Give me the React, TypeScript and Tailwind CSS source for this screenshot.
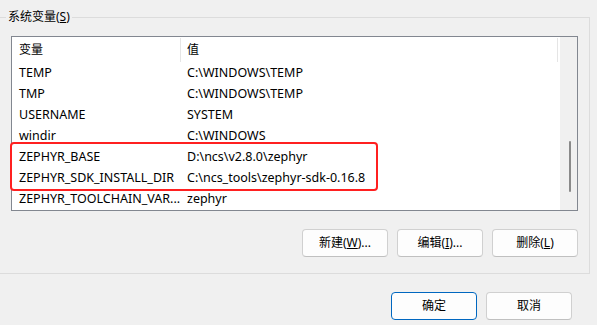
import React from "react";

const ROWS: [string, string][] = [
  ["TEMP", "C:\\WINDOWS\\TEMP"],
  ["TMP", "C:\\WINDOWS\\TEMP"],
  ["USERNAME", "SYSTEM"],
  ["windir", "C:\\WINDOWS"],
  ["ZEPHYR_BASE", "D:\\ncs\\v2.8.0\\zephyr"],
  ["ZEPHYR_SDK_INSTALL_DIR", "C:\\ncs_tools\\zephyr-sdk-0.16.8"],
  ["ZEPHYR_TOOLCHAIN_VAR...", "zephyr"],
];

function Btn({ children, primary }: { children: React.ReactNode; primary?: boolean }) {
  return (
    <button
      className={
        "w-[86px] h-[28px] rounded-[4px] bg-[#fdfdfd] text-[12px] text-black flex items-center justify-center " +
        (primary ? "border border-[#0067c0]" : "border border-[#d0d0d0] border-b-[#c0c0c0]")
      }
    >
      {children}
    </button>
  );
}

export default function App() {
  return (
    <div
      className="w-[597px] h-[325px] bg-[#f0f0f0] overflow-hidden text-[12px] text-black"
      style={{ fontFamily: '"Noto Sans", "Noto Sans CJK SC", sans-serif' }}
    >
      {/* group box */}
      <div className="relative mt-[17px] ml-[-2px] w-[592px] h-[257px] border border-[#dcdcdc] pt-[18px] pl-[12px]">
        <div className="absolute left-[7px] top-[-9px] bg-[#f0f0f0] px-[2px] leading-[16px]">
          系统变量(<span className="underline">S</span>)
        </div>

        {/* list view */}
        <div className="relative w-[567px] h-[175px] border border-[#828790] bg-white flex">
          <div className="flex-1 flex flex-col">
            <div className="h-[26px] flex items-start pt-[1px]">
              <div className="w-[169px] pl-[7px] border-r border-[#e5e5e5] h-[24px] flex items-center">变量</div>
              <div className="w-[377px] pl-[6px] border-r border-[#e5e5e5] h-[24px] flex items-center">值</div>
            </div>
            {ROWS.map(([k, v]) => (
              <div key={k} className="h-[21px] flex items-center whitespace-nowrap text-[12.5px]">
                <div className="w-[169px] pl-[7px] overflow-hidden">{k}</div>
                <div className="pl-[6px]">{v}</div>
              </div>
            ))}
          </div>
          {/* scrollbar */}
          <div className="w-[17px] bg-[#f0f0f0] flex justify-center pt-[104px]">
            <div className="w-[2px] h-[51px] bg-[#8a8a8a] rounded-full ml-[2px]" />
          </div>

          {/* highlight */}
          <div className="absolute left-[-2px] top-[105px] w-[368px] h-[49px] border-2 border-[#ff2020] rounded-[4px]" />
        </div>

        <div className="flex justify-end gap-[9px] mt-[18px] w-[567px]">
          <Btn>
            新建(<span className="underline">W</span>)...
          </Btn>
          <Btn>
            编辑(<span className="underline">I</span>)...
          </Btn>
          <Btn>
            删除(<span className="underline">L</span>)
          </Btn>
        </div>
      </div>

      <div className="flex justify-end gap-[9px] mt-[18px] pr-[25px]">
        <Btn primary>确定</Btn>
        <Btn>取消</Btn>
      </div>
    </div>
  );
}
